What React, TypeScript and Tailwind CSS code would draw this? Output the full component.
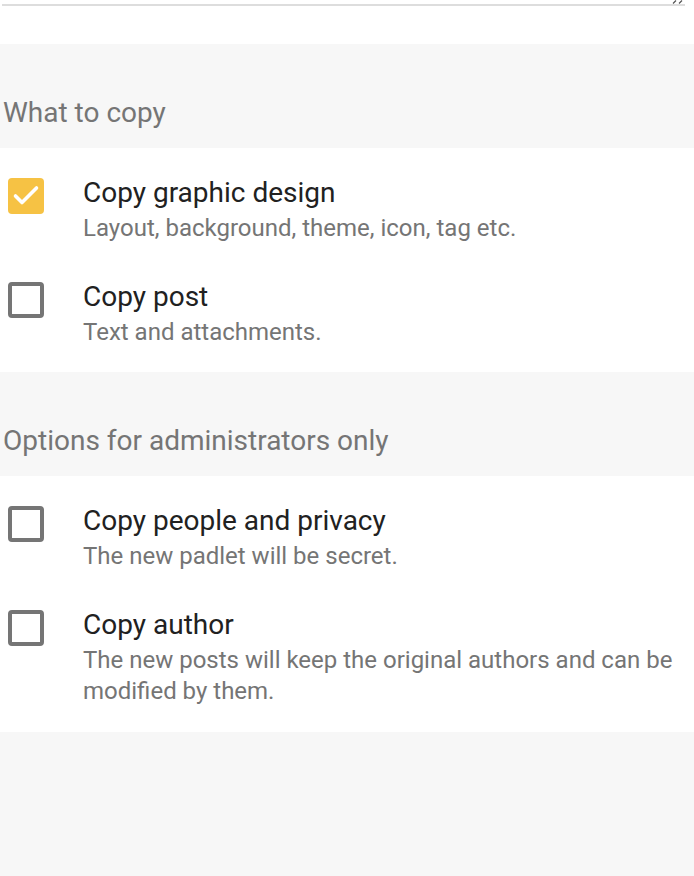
import React from "react";

type Item = { title: string; sub: string; checked?: boolean };

function Checkbox({ checked }: { checked?: boolean }) {
  if (checked) {
    return (
      <div className="w-[36px] h-[36px] rounded-[4px] bg-[#f6c244] shrink-0">
        <svg width="36" height="36" viewBox="0 0 36 36" fill="none">
          <path d="M7.5 18L14 24.5L28.5 10" stroke="white" strokeWidth="3.6" strokeLinecap="round" strokeLinejoin="round" />
        </svg>
      </div>
    );
  }
  return <div className="w-[36px] h-[36px] rounded-[4px] border-4 border-[#757575] bg-white shrink-0" />;
}

function Row({ item }: { item: Item }) {
  return (
    <div className="flex">
      <div className="ml-[8px] mt-[4px]">
        <Checkbox checked={item.checked} />
      </div>
      <div className="ml-[39px] pr-[16px] pt-[1px]">
        <div className="text-[28px] leading-[36px] text-[#212121]">{item.title}</div>
        <div className="mt-[2px] text-[24px] leading-[31px] text-[#757575]">{item.sub}</div>
      </div>
    </div>
  );
}

function Header({ text }: { text: string }) {
  return (
    <div className="h-[104px] flex items-end pb-[19px] pl-[3px] text-[28px] leading-[32px] text-[#757575]">
      {text}
    </div>
  );
}

export default function App() {
  const a: Item[] = [
    { title: "Copy graphic design", sub: "Layout, background, theme, icon, tag etc.", checked: true },
    { title: "Copy post", sub: "Text and attachments." },
  ];
  const b: Item[] = [
    { title: "Copy people and privacy", sub: "The new padlet will be secret." },
    { title: "Copy author", sub: "The new posts will keep the original authors and can be modified by them." },
  ];
  return (
    <div className="w-[694px] min-h-[876px] bg-[#f7f7f7] font-['Roboto',sans-serif]">
      <div className="relative bg-white h-[44px] pt-[4px] pl-[2px]">
        <div className="h-[2px] w-[683px] bg-[#dddddd]" />
        <svg className="absolute left-[670px] top-0" width="14" height="4" viewBox="0 0 14 4">
          <path d="M3 3.5L6 0.5M9 3.5L12 0.5" stroke="#555" strokeWidth="1.2" />
        </svg>
      </div>
      <Header text="What to copy" />
      <div className="bg-white pt-[26px] pb-[24px] flex flex-col gap-[34px]">
        {a.map((i) => (
          <Row key={i.title} item={i} />
        ))}
      </div>
      <Header text="Options for administrators only" />
      <div className="bg-white pt-[26px] pb-[25px] flex flex-col gap-[34px]">
        {b.map((i) => (
          <Row key={i.title} item={i} />
        ))}
      </div>
    </div>
  );
}
